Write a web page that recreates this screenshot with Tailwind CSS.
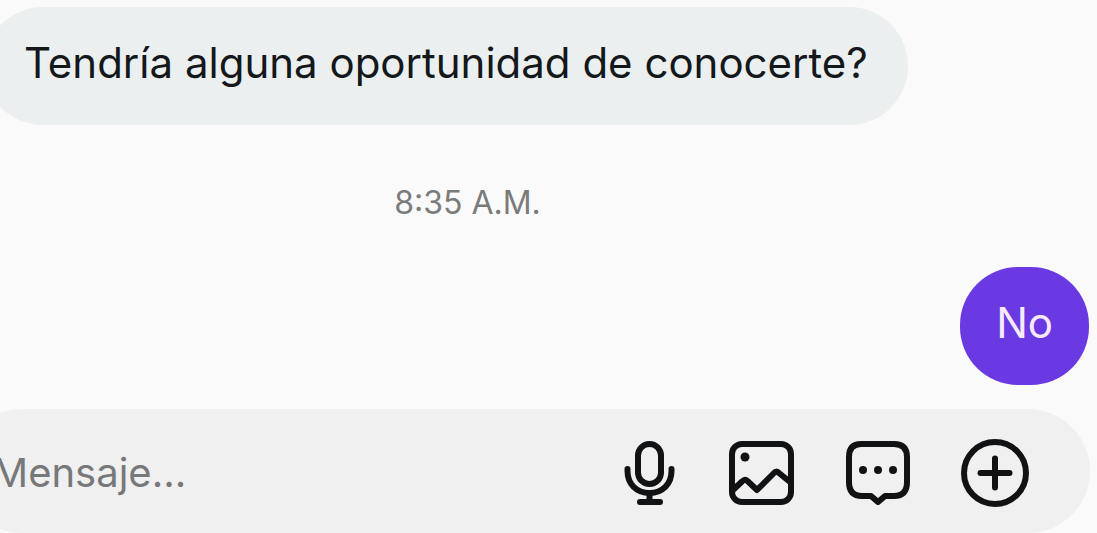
<!DOCTYPE html>
<html lang="es">
<head>
  <meta charset="UTF-8" />
  <meta name="viewport" content="width=device-width, initial-scale=1.0" />
  <title>Mensajes</title>
  <script src="https://cdn.jsdelivr.net/npm/@tailwindcss/browser@4"></script>
</head>
<body class="bg-[#fafafa] font-['Inter',sans-serif] text-[#14181b] overflow-hidden">
  <div class="min-h-screen flex flex-col -ml-4 pt-[7px] pr-2">
    <!-- Conversación -->
    <main class="flex-1 flex flex-col">
      <p class="self-start rounded-full bg-[#ebeff0] px-10 pt-[23px] pb-[29px] text-[42px] leading-[66px] whitespace-nowrap">Tendría alguna oportunidad de conocerte?</p>
      <time class="block pt-[58px] pl-[14px] pr-[152px] text-center text-[32px] leading-10 text-[#7b7b7b]">8:35 A.M.</time>
      <p class="self-end mt-[44px] rounded-[58px] bg-[#6a39e2] px-9 pt-[23px] pb-[29px] text-[42px] leading-[66px] text-[#f6eaff]">No</p>
    </main>

    <!-- Barra para escribir -->
    <form class="mt-6 -ml-6 -mr-px h-[124px] flex items-center gap-12 rounded-full bg-[#f0f0f0] pt-[3px] pl-8 pr-[61px]">
      <input type="text" aria-label="Mensaje" placeholder="Mensaje..." class="flex-1 min-w-0 text-[40px] leading-[66px] placeholder:text-[#77787a] outline-none" />
      <button type="button" aria-label="Grabar audio">
        <svg class="size-[68px]" viewBox="0 0 68 68" fill="none" stroke="#111214" stroke-width="6" stroke-linecap="round" stroke-linejoin="round">
          <rect x="25" y="5" width="23" height="40" rx="11.5" />
          <path d="M14.500 30v2c0 13 9 22 22 22s22-9 22-22v-2M36.500 54v8M27 63h20" />
        </svg>
      </button>
      <button type="button" aria-label="Enviar imagen">
        <svg class="size-[68px]" viewBox="0 0 68 68" fill="none" stroke="#111214" stroke-width="6" stroke-linecap="round" stroke-linejoin="round">
          <rect x="3" y="5" width="59" height="58" rx="10" />
          <path d="M4 51 13 42.500Q16 39.500 18.500 42L28 51 45 34Q47.500 31 50 34L61 43" />
          <circle cx="16" cy="18" r="4.500" fill="#111214" stroke="none" />
        </svg>
      </button>
      <button type="button" aria-label="Respuestas rápidas">
        <svg class="size-[68px]" viewBox="0 0 68 68" fill="none" stroke="#111214" stroke-width="6" stroke-linecap="round" stroke-linejoin="round">
          <path d="M16 5h33q13 0 13 13v25q0 14-13 14h-9l-7 6-7-6H17Q4 57 4 43V18Q4 5 16 5z" />
          <g fill="#111214" stroke="none">
            <circle cx="18" cy="31" r="4" />
            <circle cx="33" cy="31" r="4" />
            <circle cx="48" cy="31" r="4" />
          </g>
        </svg>
      </button>
      <button type="button" aria-label="Más opciones">
        <svg class="size-[68px]" viewBox="0 0 68 68" fill="none" stroke="#111214" stroke-width="6" stroke-linecap="round">
          <circle cx="34" cy="34" r="31" />
          <path d="M34 19.500v29M19.500 34h29" />
        </svg>
      </button>
    </form>
  </div>
</body>
</html>
